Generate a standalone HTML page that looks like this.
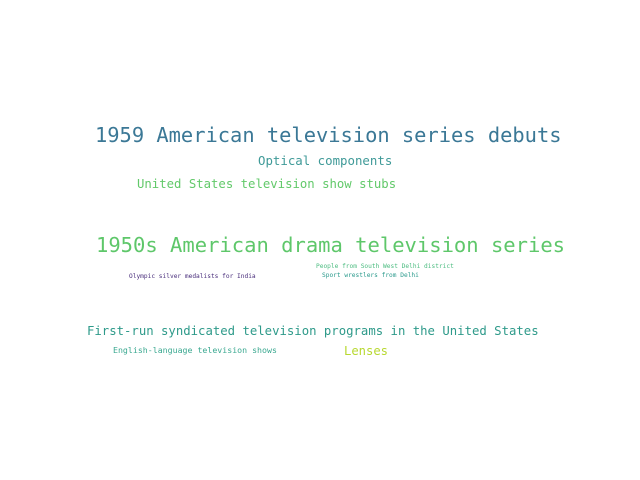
<!DOCTYPE html>
<html><head><meta charset="utf-8"><style>
html,body{margin:0;padding:0;background:#fff;width:640px;height:480px;overflow:hidden}
div{position:absolute;white-space:nowrap;font-family:"DejaVu Sans Mono","Liberation Mono",monospace;line-height:1}
</style></head><body>
<div style="left:95px;top:125px;font-size:20.4px;color:#3b7896">1959 American television series debuts</div>
<div style="left:258px;top:155px;font-size:12.4px;color:#3f9a98">Optical components</div>
<div style="left:137px;top:178px;font-size:12.3px;color:#62c96a">United States television show stubs</div>
<div style="left:96px;top:235px;font-size:20.5px;color:#5ec76a">1950s American drama television series</div>
<div style="left:316px;top:264px;font-size:6.2px;color:#4cbc80">People from South West Delhi district</div>
<div style="left:322px;top:273px;font-size:6.2px;color:#2a9a8c">Sport wrestlers from Delhi</div>
<div style="left:129px;top:274px;font-size:6.2px;color:#4a2f7c">Olympic silver medalists for India</div>
<div style="left:87px;top:325px;font-size:12.3px;color:#2e9a8a">First-run syndicated television programs in the United States</div>
<div style="left:113px;top:346px;font-size:8.25px;color:#3aa890">English-language television shows</div>
<div style="left:344px;top:345px;font-size:12.2px;color:#b8d830">Lenses</div>
</body></html>
